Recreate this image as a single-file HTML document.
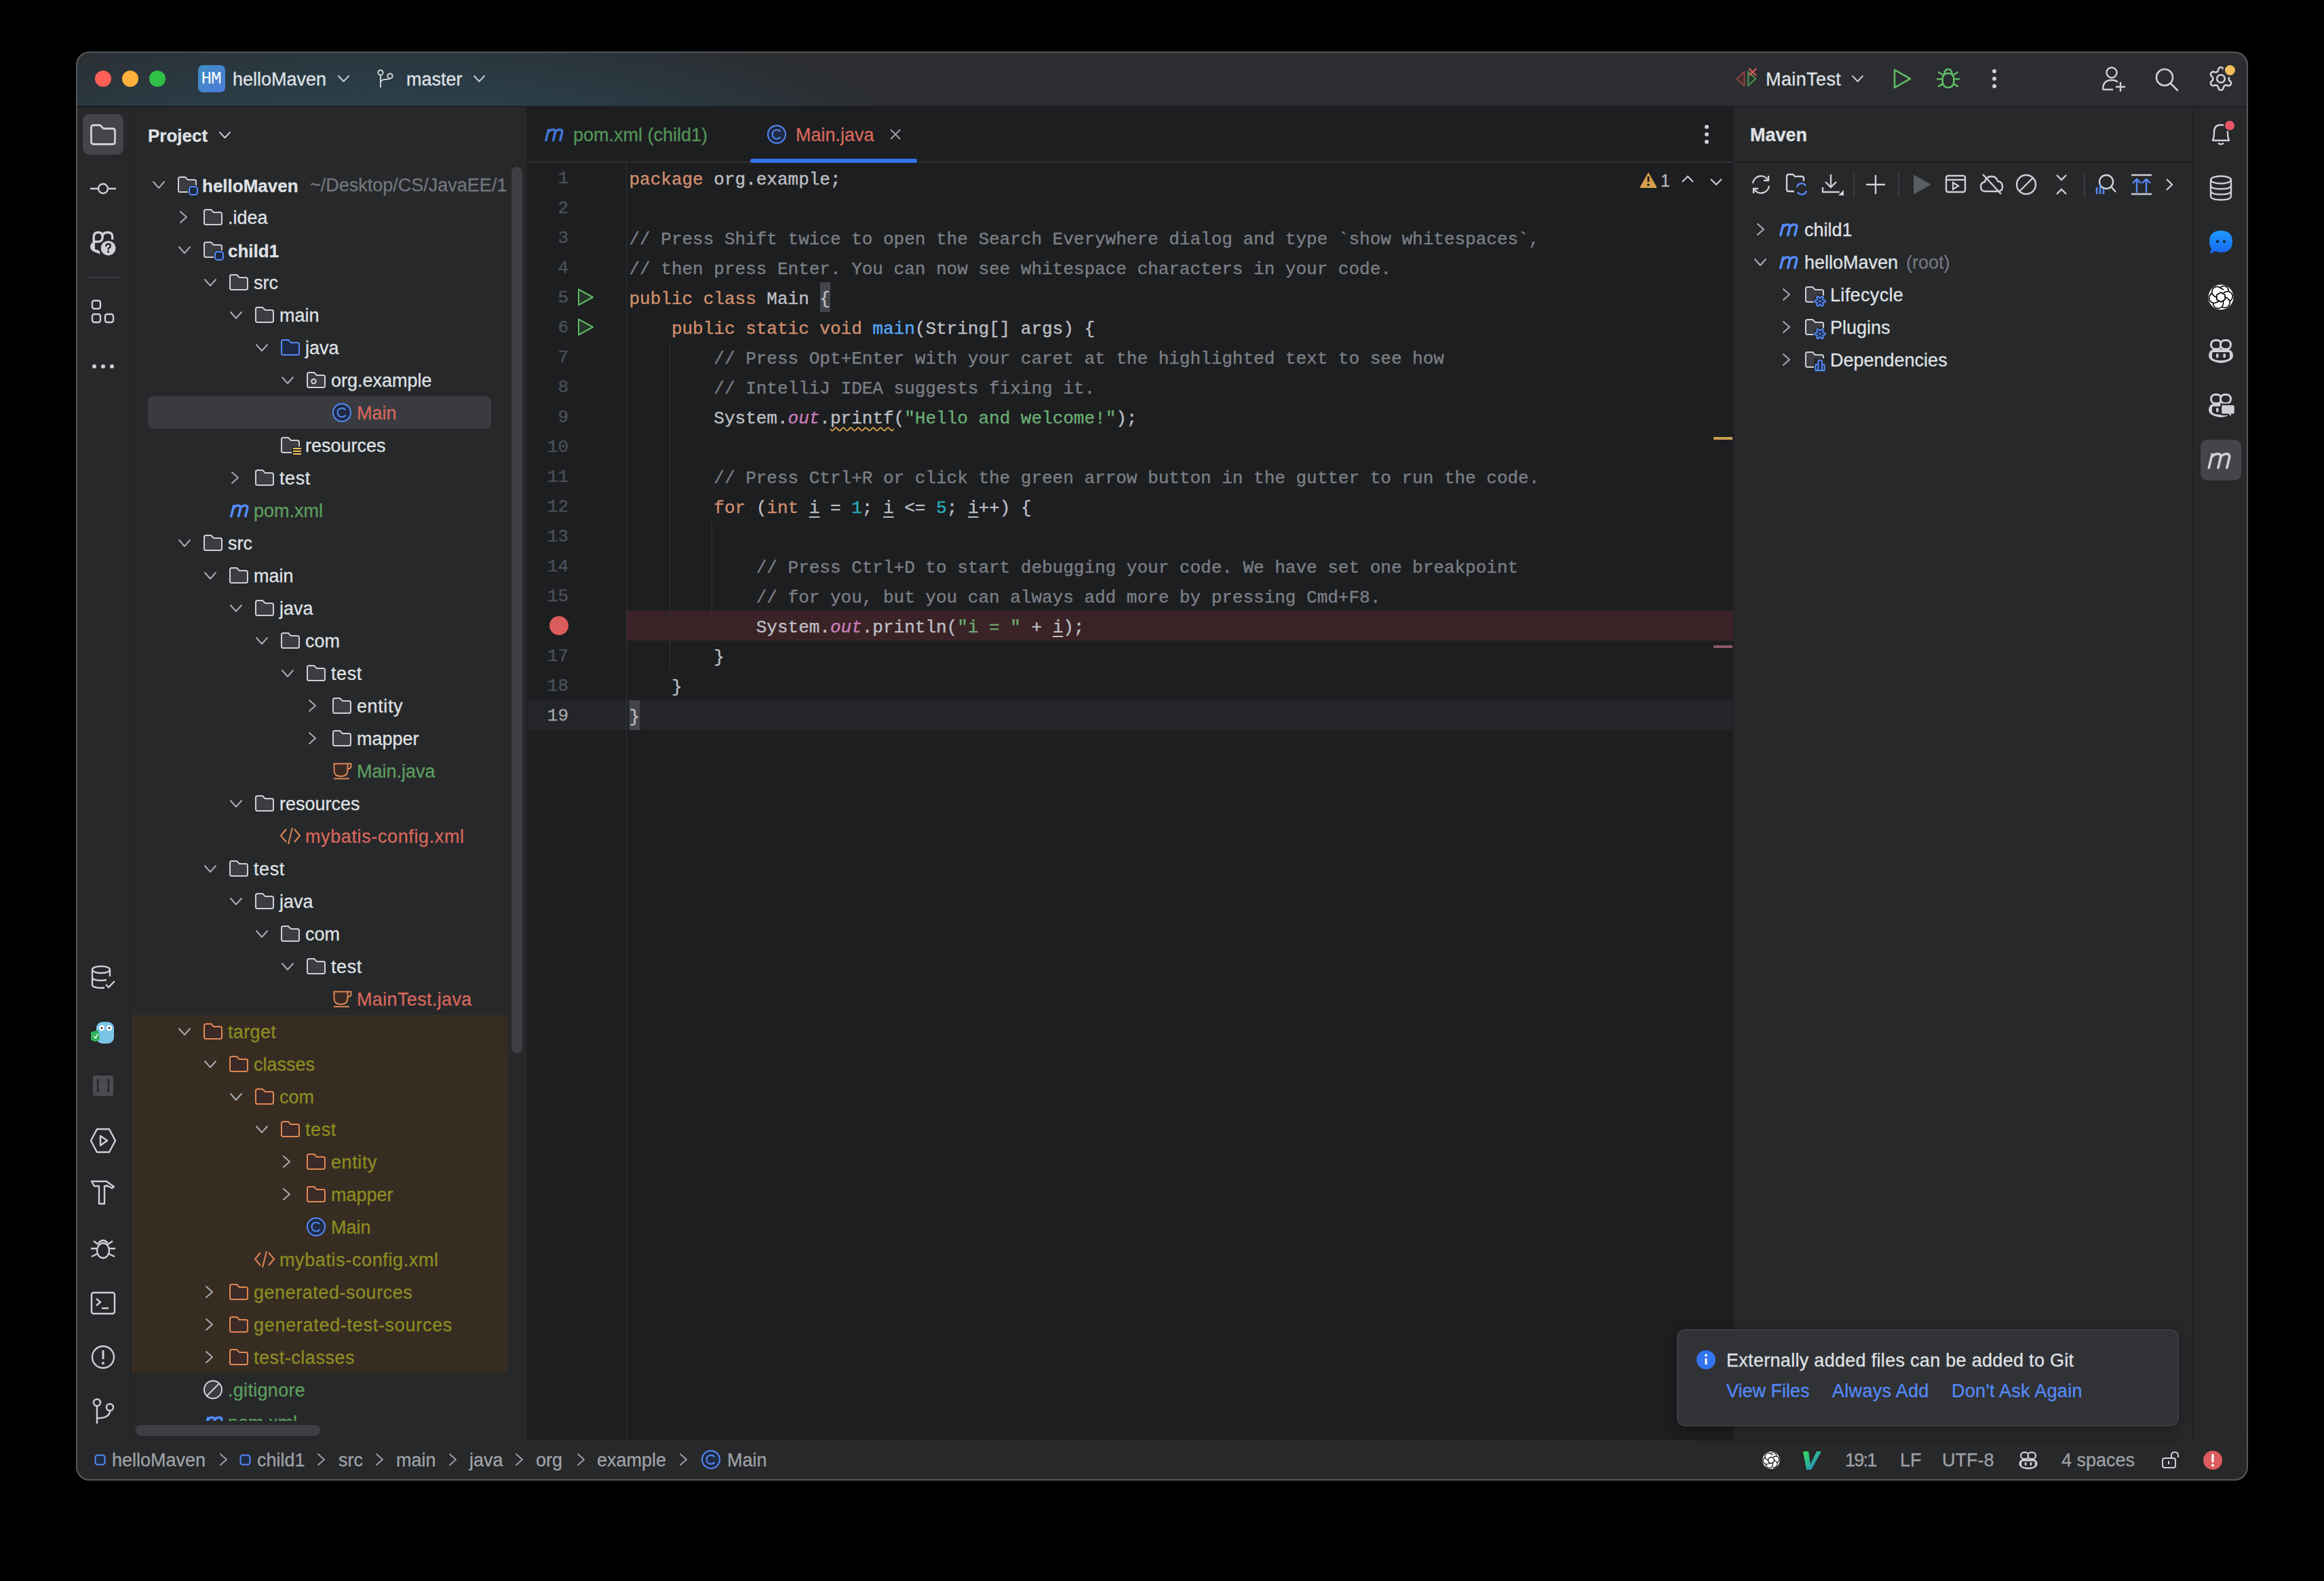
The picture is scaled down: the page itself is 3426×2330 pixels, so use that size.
<!DOCTYPE html>
<html><head><meta charset="utf-8">
<style>
*{box-sizing:border-box;margin:0;padding:0}
html,body{width:3426px;height:2330px;background:#000;overflow:hidden}
body{position:relative;font-family:"Liberation Sans",sans-serif;color:#dfe1e5}
.a{position:absolute}
#win{position:absolute;left:112px;top:76px;width:3202px;height:2106px;border-radius:20px;overflow:hidden;background:#27282a}
#pg{position:absolute;left:-112px;top:-76px;width:3426px;height:2330px}
#winborder{position:absolute;left:112px;top:76px;width:3202px;height:2106px;border-radius:20px;border:2px solid #55575a;z-index:50}
.t{position:absolute;white-space:pre;line-height:1;-webkit-text-stroke:0.3px currentColor}
.mono{font-family:"Liberation Mono",monospace;-webkit-text-stroke:0.4px currentColor}
.mono span{-webkit-text-stroke:0.4px currentColor}
svg.ic{position:absolute;overflow:visible}
</style></head><body>
<div id="win"><div id="pg">
<div class="a" style="left:112px;top:76px;width:3202px;height:80px;background:radial-gradient(ellipse 780px 210px at 460px 150px,#2d4854 0%,#2a3c46 50%,#2b2d30 100%);"></div>
<div class="a" style="left:112px;top:156px;width:3202px;height:2px;background:#1e1f22;"></div>
<div class="a" style="left:112px;top:158px;width:80px;height:1964px;background:#27282a;"></div>
<div class="a" style="left:192px;top:158px;width:1px;height:1964px;background:#1e1f22;"></div>
<div class="a" style="left:193px;top:158px;width:583px;height:1964px;background:#27282a;"></div>
<div class="a" style="left:776px;top:158px;width:1px;height:1964px;background:#1e1f22;"></div>
<div class="a" style="left:777px;top:158px;width:1778px;height:1964px;background:#1d1e20;"></div>
<div class="a" style="left:2555px;top:158px;width:1px;height:1964px;background:#1e1f22;"></div>
<div class="a" style="left:2556px;top:158px;width:676px;height:1964px;background:#27282a;"></div>
<div class="a" style="left:3232px;top:158px;width:1px;height:1964px;background:#1e1f22;"></div>
<div class="a" style="left:3233px;top:158px;width:81px;height:1964px;background:#27282a;"></div>
<div class="a" style="left:112px;top:2122px;width:3202px;height:1px;background:#1e1f22;"></div>
<div class="a" style="left:112px;top:2123px;width:3202px;height:59px;background:#27282a;"></div>
<div class="a" style="left:140px;top:104px;width:24px;height:24px;border-radius:50%;background:#ff5f57"></div>
<div class="a" style="left:180px;top:104px;width:24px;height:24px;border-radius:50%;background:#fdb13c"></div>
<div class="a" style="left:220px;top:104px;width:24px;height:24px;border-radius:50%;background:#30bf47"></div>
<div class="a" style="left:292px;top:96px;width:40px;height:40px;border-radius:7px;background:linear-gradient(135deg,#3f8cc4,#4c7ed9)"></div>
<div class="t" style="left:296.5px;top:103.49px;font-size:26px;color:#ffffff;font-weight:normal;font-family:'Liberation Mono',monospace;letter-spacing:-1px;-webkit-text-stroke:0">HM</div>
<div class="t" style="left:343px;top:104.14px;font-size:27px;color:#dfe1e5;font-weight:normal;">helloMaven</div>
<svg class="ic" style="left:496.5px;top:110.0px" width="19" height="12" viewBox="0 0 19 12" ><path d="M2 2 L9.5 10 L17 2" fill="none" stroke="#c9ccd2" stroke-width="2" stroke-linecap="round" stroke-linejoin="round"/></svg>
<svg class="ic" style="left:556px;top:101px" width="26" height="30" viewBox="0 0 26 30" ><circle cx="5" cy="6" r="3.6" fill="none" stroke="#ced0d6" stroke-width="2"/><circle cx="19" cy="11" r="3.6" fill="none" stroke="#ced0d6" stroke-width="2"/><path d="M5 9.6 V28 M5 22 Q5 16 12 16 Q19 16 19 14.6" fill="none" stroke="#ced0d6" stroke-width="2"/></svg>
<div class="t" style="left:599px;top:104.14px;font-size:27px;color:#dfe1e5;font-weight:normal;">master</div>
<svg class="ic" style="left:696.5px;top:110.0px" width="19" height="12" viewBox="0 0 19 12" ><path d="M2 2 L9.5 10 L17 2" fill="none" stroke="#c9ccd2" stroke-width="2" stroke-linecap="round" stroke-linejoin="round"/></svg>
<svg class="ic" style="left:2556px;top:98px" width="36" height="36" viewBox="0 0 36 36" ><path d="M15.5 7.5 L4.5 18 L15.5 28.5 Z" fill="#43282a" stroke="#8a4545" stroke-width="2.2" stroke-linejoin="round"/><path d="M21 7.5 L32 18 L21 28.5 Z" fill="#25382a" stroke="#4f8a55" stroke-width="2.2" stroke-linejoin="round"/><path d="M22.5 3 L33 13.5 M33 3 L22.5 13.5" stroke="#e05555" stroke-width="2.4"/></svg>
<div class="t" style="left:2603px;top:104.14px;font-size:27px;color:#dfe1e5;font-weight:normal;letter-spacing:0.4px;">MainTest</div>
<svg class="ic" style="left:2728.5px;top:110.0px" width="19" height="12" viewBox="0 0 19 12" ><path d="M2 2 L9.5 10 L17 2" fill="none" stroke="#c9ccd2" stroke-width="2" stroke-linecap="round" stroke-linejoin="round"/></svg>
<svg class="ic" style="left:2790px;top:100px" width="30" height="32" viewBox="0 0 30 32" ><path d="M3 3 L26 16 L3 29 Z" fill="none" stroke="#5fb865" stroke-width="2.6" stroke-linejoin="round"/></svg>
<svg class="ic" style="left:2854px;top:98px" width="36" height="36" viewBox="0 0 36 36" ><path d="M18 10 Q26.5 10 26.5 20 Q26.5 31 18 31 Q9.5 31 9.5 20 Q9.5 10 18 10 Z" fill="none" stroke="#5fb865" stroke-width="2.6"/><path d="M12.5 11.5 Q12.5 4 18 4 Q23.5 4 23.5 11.5" fill="none" stroke="#5fb865" stroke-width="2.6"/><path d="M2 18.5 H9.5 M26.5 18.5 H34 M4 8.5 L10.5 12.5 M32 8.5 L25.5 12.5 M4 29 L10.5 25.5 M32 29 L25.5 25.5" stroke="#5fb865" stroke-width="2.6" stroke-linecap="round"/></svg>
<div class="a" style="left:2937px;top:102px;width:6px;height:6px;border-radius:50%;background:#ced0d6"></div>
<div class="a" style="left:2937px;top:113px;width:6px;height:6px;border-radius:50%;background:#ced0d6"></div>
<div class="a" style="left:2937px;top:124px;width:6px;height:6px;border-radius:50%;background:#ced0d6"></div>
<svg class="ic" style="left:3097px;top:96px" width="40" height="42" viewBox="0 0 40 42" ><circle cx="16" cy="11" r="7.5" fill="none" stroke="#ced0d6" stroke-width="2.4"/><path d="M3 36 Q3 22 16 22 Q22 22 25 25" fill="none" stroke="#ced0d6" stroke-width="2.4"/><path d="M3 36 H18 M29 25 V39 M22 32 H36" stroke="#ced0d6" stroke-width="2.4"/></svg>
<svg class="ic" style="left:3175px;top:98px" width="40" height="40" viewBox="0 0 40 40" ><circle cx="16" cy="16" r="12" fill="none" stroke="#ced0d6" stroke-width="2.6"/><path d="M25 25 L35 35" stroke="#ced0d6" stroke-width="2.6" stroke-linecap="round"/></svg>
<svg class="ic" style="left:3255px;top:98px" width="38" height="38" viewBox="0 0 38 38" ><path d="M19.00 34.80 L18.12 34.70 L17.28 34.40 L16.48 33.89 L15.78 33.15 L15.32 31.72 L15.01 30.28 L14.59 29.49 L14.16 28.88 L13.70 28.40 L13.20 28.05 L12.64 27.79 L12.00 27.64 L11.25 27.57 L10.36 27.60 L8.96 28.04 L7.49 28.36 L6.50 28.13 L5.66 27.69 L4.98 27.11 L4.45 26.40 L4.10 25.59 L3.94 24.71 L3.98 23.77 L4.27 22.79 L5.28 21.68 L6.37 20.69 L6.84 19.93 L7.15 19.24 L7.34 18.61 L7.40 18.00 L7.34 17.39 L7.15 16.76 L6.84 16.07 L6.37 15.31 L5.28 14.32 L4.27 13.21 L3.98 12.23 L3.94 11.29 L4.10 10.41 L4.45 9.60 L4.98 8.89 L5.66 8.31 L6.50 7.87 L7.49 7.64 L8.96 7.96 L10.36 8.40 L11.25 8.43 L12.00 8.36 L12.64 8.21 L13.20 7.95 L13.70 7.60 L14.16 7.12 L14.59 6.51 L15.01 5.72 L15.32 4.28 L15.78 2.85 L16.48 2.11 L17.28 1.60 L18.12 1.30 L19.00 1.20 L19.88 1.30 L20.72 1.60 L21.52 2.11 L22.22 2.85 L22.68 4.28 L22.99 5.72 L23.41 6.51 L23.84 7.12 L24.30 7.60 L24.80 7.95 L25.36 8.21 L26.00 8.36 L26.75 8.43 L27.64 8.40 L29.04 7.96 L30.51 7.64 L31.50 7.87 L32.34 8.31 L33.02 8.89 L33.55 9.60 L33.90 10.41 L34.06 11.29 L34.02 12.23 L33.73 13.21 L32.72 14.32 L31.63 15.31 L31.16 16.07 L30.85 16.76 L30.66 17.39 L30.60 18.00 L30.66 18.61 L30.85 19.24 L31.16 19.93 L31.63 20.69 L32.72 21.68 L33.73 22.79 L34.02 23.77 L34.06 24.71 L33.90 25.59 L33.55 26.40 L33.02 27.11 L32.34 27.69 L31.50 28.13 L30.51 28.36 L29.04 28.04 L27.64 27.60 L26.75 27.57 L26.00 27.64 L25.36 27.79 L24.80 28.05 L24.30 28.40 L23.84 28.88 L23.41 29.49 L22.99 30.28 L22.68 31.72 L22.22 33.15 L21.52 33.89 L20.72 34.40 L19.88 34.70 L19.00 34.80 Z" fill="none" stroke="#ced0d6" stroke-width="2.6" stroke-linejoin="round"/><circle cx="19" cy="18" r="5.8" fill="none" stroke="#ced0d6" stroke-width="2.6"/></svg>
<div class="a" style="left:3277px;top:93px;width:21px;height:21px;border-radius:50%;background:#f2be5a;border:3px solid #2b2d30"></div>
<div class="a" style="left:122px;top:168px;width:60px;height:60px;background:#43454a;border-radius:10px"></div>
<svg class="ic" style="left:132px;top:182px" width="40" height="33" viewBox="0 0 40 33" ><path d="M2.5 6 Q2.5 2.5 6 2.5 L15.5 2.5 L20.5 7.5 L34 7.5 Q37.5 7.5 37.5 11 L37.5 27 Q37.5 30.5 34 30.5 L6 30.5 Q2.5 30.5 2.5 27 Z" fill="none" stroke="#ced0d6" stroke-width="2.8" stroke-linejoin="round"/></svg>
<svg class="ic" style="left:132px;top:266px" width="40" height="24" viewBox="0 0 40 24" ><circle cx="20" cy="12" r="7" fill="none" stroke="#ced0d6" stroke-width="2.4"/><path d="M1 12 H13 M27 12 H39" stroke="#ced0d6" stroke-width="2.4"/></svg>
<svg class="ic" style="left:122px;top:327px" width="60" height="60" viewBox="0 0 60 60" ><path d="M16.2 22 Q16.2 15.5 23 15.5 Q29.2 15.5 29.2 22 Q29.2 29.2 22.5 29.2 L16.2 29.2 Z" fill="none" stroke="#ced0d6" stroke-width="3.4" stroke-linejoin="round"/><path d="M29.2 22 Q29.2 15.5 36.5 15.5 Q43.8 15.5 43.8 22 L43.8 26" fill="none" stroke="#ced0d6" stroke-width="3.4"/><path d="M16.5 29 Q11 31.5 11 36.5 Q11 42 17.5 44.5 L26 47.5 L24.5 42.5 L18 40.3 L18 29 Z" fill="#ced0d6"/><circle cx="37.6" cy="38.7" r="13" fill="#27282a"/><circle cx="37.6" cy="38.7" r="10.8" fill="#ced0d6"/><path d="M34.3 35.3 Q34.5 32.5 37.7 32.5 Q40.9 32.5 40.9 35.3 Q40.9 37.3 38.5 38.5 Q37.6 39.2 37.6 40.5" fill="none" stroke="#27282a" stroke-width="2.4" stroke-linecap="round"/><circle cx="37.6" cy="44" r="1.6" fill="#27282a"/></svg>
<div class="a" style="left:128px;top:408px;width:48px;height:2px;background:#393b40;"></div>
<svg class="ic" style="left:134px;top:441px" width="36" height="38" viewBox="0 0 36 38" ><rect x="2" y="2" width="12" height="12" rx="3" fill="none" stroke="#ced0d6" stroke-width="2.4"/><rect x="2" y="22" width="12" height="12" rx="3" fill="none" stroke="#ced0d6" stroke-width="2.4"/><rect x="21" y="22" width="12" height="12" rx="3" fill="none" stroke="#ced0d6" stroke-width="2.4"/></svg>
<div class="a" style="left:136px;top:537px;width:6px;height:6px;border-radius:50%;background:#ced0d6"></div>
<div class="a" style="left:149px;top:537px;width:6px;height:6px;border-radius:50%;background:#ced0d6"></div>
<div class="a" style="left:162px;top:537px;width:6px;height:6px;border-radius:50%;background:#ced0d6"></div>
<svg class="ic" style="left:132.0px;top:1421.0px" width="40" height="40" viewBox="0 0 40 40" ><ellipse cx="17" cy="8" rx="13" ry="5" fill="none" stroke="#ced0d6" stroke-width="2.4"/><path d="M4 8 V30 Q4 35 17 35 Q20 35 22 34.5 M30 8 V18 M4 19 Q4 24 17 24 Q22 24 25 23" fill="none" stroke="#ced0d6" stroke-width="2.4"/><path d="M24 30 L28 34 L37 25" fill="none" stroke="#ced0d6" stroke-width="2.4"/></svg>
<svg class="ic" style="left:132.0px;top:1502.0px" width="40" height="40" viewBox="0 0 40 40" ><rect x="10" y="4" width="26" height="32" rx="9" fill="#7bc4e8"/><circle cx="18" cy="13" r="4" fill="#fff"/><circle cx="29" cy="13" r="4" fill="#fff"/><circle cx="18" cy="13" r="1.6" fill="#222"/><circle cx="29" cy="13" r="1.6" fill="#222"/><path d="M2 19 L13 16 L15 30 Q8 36 2 30 Z" fill="#2fb35a"/><path d="M6 25 L9 28 L12 22" fill="none" stroke="#fff" stroke-width="1.6"/></svg>
<svg class="ic" style="left:132.0px;top:1580.0px" width="40" height="40" viewBox="0 0 40 40" ><rect x="5" y="5" width="30" height="30" rx="3" fill="#4a4c50"/><path d="M15 12 H12 V28 H15 M25 12 H28 V28 H25" fill="none" stroke="#27282a" stroke-width="2.6"/></svg>
<svg class="ic" style="left:132.0px;top:1661.0px" width="40" height="40" viewBox="0 0 40 40" ><path d="M11 3 H29 L38 20 L29 37 H11 L2 20 Z" fill="none" stroke="#ced0d6" stroke-width="2.4" stroke-linejoin="round"/><path d="M16 13 L26 20 L16 27 Z" fill="none" stroke="#ced0d6" stroke-width="2.4" stroke-linejoin="round"/></svg>
<svg class="ic" style="left:132.0px;top:1737.0px" width="40" height="40" viewBox="0 0 40 40" ><path d="M3 4 H25 L36 12 L33 14 L25 10 V11 H22 V37 H14 V11 H7 Z" fill="none" stroke="#ced0d6" stroke-width="2.4" stroke-linejoin="round"/></svg>
<svg class="ic" style="left:132.0px;top:1821.0px" width="40" height="40" viewBox="0 0 40 40" ><ellipse cx="20" cy="22" rx="9" ry="11" fill="none" stroke="#ced0d6" stroke-width="2.4"/><path d="M13 11 Q20 3 27 11" fill="none" stroke="#ced0d6" stroke-width="2.4"/><path d="M2 19 H11 M29 19 H38 M3 31 L11 27 M37 31 L29 27 M6 8 L13 13 M34 8 L27 13" stroke="#ced0d6" stroke-width="2.4"/></svg>
<svg class="ic" style="left:132.0px;top:1901.0px" width="40" height="40" viewBox="0 0 40 40" ><rect x="3" y="4" width="34" height="31" rx="3" fill="none" stroke="#ced0d6" stroke-width="2.4"/><path d="M10 13 L16 18 L10 23 M18 27 H28" fill="none" stroke="#ced0d6" stroke-width="2.4"/></svg>
<svg class="ic" style="left:132.0px;top:1980.0px" width="40" height="40" viewBox="0 0 40 40" ><circle cx="20" cy="20" r="16" fill="none" stroke="#ced0d6" stroke-width="2.4"/><path d="M20 10 V23" stroke="#ced0d6" stroke-width="3"/><circle cx="20" cy="29" r="2" fill="#ced0d6"/></svg>
<svg class="ic" style="left:132.0px;top:2060.0px" width="40" height="40" viewBox="0 0 40 40" ><circle cx="11" cy="7" r="5" fill="none" stroke="#ced0d6" stroke-width="2.4"/><circle cx="30" cy="14" r="5" fill="none" stroke="#ced0d6" stroke-width="2.4"/><path d="M11 12 V38 M11 30 Q30 30 30 19" fill="none" stroke="#ced0d6" stroke-width="2.4"/></svg>
<div class="t" style="left:218px;top:186.99px;font-size:26px;color:#dfe1e5;font-weight:bold;">Project</div>
<svg class="ic" style="left:321.5px;top:193.0px" width="19" height="12" viewBox="0 0 19 12" ><path d="M2 2 L9.5 10 L17 2" fill="none" stroke="#c9ccd2" stroke-width="2" stroke-linecap="round" stroke-linejoin="round"/></svg>
<div class="a" style="left:194px;top:1496px;width:554px;height:528px;background:#372c22;"></div>
<div class="a" style="left:218px;top:584px;width:506px;height:48px;background:#393b40;border-radius:8px"></div>
<div class="a" style="left:193px;top:158px;width:583px;height:1936px;overflow:hidden"><div class="a" style="left:-193px;top:-158px;width:3426px;height:2330px">
<svg class="ic" style="left:224.0px;top:265.5px" width="20" height="13" viewBox="0 0 20 13" ><path d="M2 2 L10.0 11 L18 2" fill="none" stroke="#a8abb1" stroke-width="2" stroke-linecap="round" stroke-linejoin="round"/></svg>
<svg class="ic" style="left:262px;top:260px" width="32" height="30" viewBox="0 0 32 30" ><path d="M1 3.5 Q1 1 3.5 1 L11 1 L15 5 L24.5 5 Q27 5 27 7.5 L27 20.5 Q27 23 24.5 23 L3.5 23 Q1 23 1 20.5 Z" fill="#3b3d42" stroke="#ced0d6" stroke-width="2"/><rect x="15" y="13" width="16" height="16" rx="4" fill="#27282a"/><rect x="17" y="15" width="12" height="12" rx="3.5" fill="#1e2a45" stroke="#548af7" stroke-width="2"/></svg>
<div class="t" style="left:298px;top:260.99px;font-size:26px;color:#dfe1e5;font-weight:bold;">helloMaven</div>
<div class="t" style="left:457px;top:260.14px;font-size:27px;color:#72767d;font-weight:normal;">~/Desktop/CS/JavaEE/1</div>
<svg class="ic" style="left:263.5px;top:310.0px" width="13" height="20" viewBox="0 0 13 20" ><path d="M2 2 L11 10.0 L2 18" fill="none" stroke="#a8abb1" stroke-width="2" stroke-linecap="round" stroke-linejoin="round"/></svg>
<svg class="ic" style="left:300px;top:308px" width="32" height="30" viewBox="0 0 32 30" ><path d="M1 3.5 Q1 1 3.5 1 L11 1 L15 5 L24.5 5 Q27 5 27 7.5 L27 20.5 Q27 23 24.5 23 L3.5 23 Q1 23 1 20.5 Z" fill="#3b3d42" stroke="#ced0d6" stroke-width="2"/></svg>
<div class="t" style="left:336px;top:308.14px;font-size:27px;color:#dfe1e5;font-weight:normal;">.idea</div>
<svg class="ic" style="left:262.0px;top:361.5px" width="20" height="13" viewBox="0 0 20 13" ><path d="M2 2 L10.0 11 L18 2" fill="none" stroke="#a8abb1" stroke-width="2" stroke-linecap="round" stroke-linejoin="round"/></svg>
<svg class="ic" style="left:300px;top:356px" width="32" height="30" viewBox="0 0 32 30" ><path d="M1 3.5 Q1 1 3.5 1 L11 1 L15 5 L24.5 5 Q27 5 27 7.5 L27 20.5 Q27 23 24.5 23 L3.5 23 Q1 23 1 20.5 Z" fill="#3b3d42" stroke="#ced0d6" stroke-width="2"/><rect x="15" y="13" width="16" height="16" rx="4" fill="#27282a"/><rect x="17" y="15" width="12" height="12" rx="3.5" fill="#1e2a45" stroke="#548af7" stroke-width="2"/></svg>
<div class="t" style="left:336px;top:356.99px;font-size:26px;color:#dfe1e5;font-weight:bold;">child1</div>
<svg class="ic" style="left:300.0px;top:409.5px" width="20" height="13" viewBox="0 0 20 13" ><path d="M2 2 L10.0 11 L18 2" fill="none" stroke="#a8abb1" stroke-width="2" stroke-linecap="round" stroke-linejoin="round"/></svg>
<svg class="ic" style="left:338px;top:404px" width="32" height="30" viewBox="0 0 32 30" ><path d="M1 3.5 Q1 1 3.5 1 L11 1 L15 5 L24.5 5 Q27 5 27 7.5 L27 20.5 Q27 23 24.5 23 L3.5 23 Q1 23 1 20.5 Z" fill="#3b3d42" stroke="#ced0d6" stroke-width="2"/></svg>
<div class="t" style="left:374px;top:404.14px;font-size:27px;color:#dfe1e5;font-weight:normal;">src</div>
<svg class="ic" style="left:338.0px;top:457.5px" width="20" height="13" viewBox="0 0 20 13" ><path d="M2 2 L10.0 11 L18 2" fill="none" stroke="#a8abb1" stroke-width="2" stroke-linecap="round" stroke-linejoin="round"/></svg>
<svg class="ic" style="left:376px;top:452px" width="32" height="30" viewBox="0 0 32 30" ><path d="M1 3.5 Q1 1 3.5 1 L11 1 L15 5 L24.5 5 Q27 5 27 7.5 L27 20.5 Q27 23 24.5 23 L3.5 23 Q1 23 1 20.5 Z" fill="#3b3d42" stroke="#ced0d6" stroke-width="2"/></svg>
<div class="t" style="left:412px;top:452.14px;font-size:27px;color:#dfe1e5;font-weight:normal;">main</div>
<svg class="ic" style="left:376.0px;top:505.5px" width="20" height="13" viewBox="0 0 20 13" ><path d="M2 2 L10.0 11 L18 2" fill="none" stroke="#a8abb1" stroke-width="2" stroke-linecap="round" stroke-linejoin="round"/></svg>
<svg class="ic" style="left:414px;top:500px" width="32" height="30" viewBox="0 0 32 30" ><path d="M1 3.5 Q1 1 3.5 1 L11 1 L15 5 L24.5 5 Q27 5 27 7.5 L27 20.5 Q27 23 24.5 23 L3.5 23 Q1 23 1 20.5 Z" fill="#1e2a45" stroke="#548af7" stroke-width="2"/></svg>
<div class="t" style="left:450px;top:500.14px;font-size:27px;color:#dfe1e5;font-weight:normal;">java</div>
<svg class="ic" style="left:414.0px;top:553.5px" width="20" height="13" viewBox="0 0 20 13" ><path d="M2 2 L10.0 11 L18 2" fill="none" stroke="#a8abb1" stroke-width="2" stroke-linecap="round" stroke-linejoin="round"/></svg>
<svg class="ic" style="left:452px;top:548px" width="32" height="30" viewBox="0 0 32 30" ><path d="M1 3.5 Q1 1 3.5 1 L11 1 L15 5 L24.5 5 Q27 5 27 7.5 L27 20.5 Q27 23 24.5 23 L3.5 23 Q1 23 1 20.5 Z" fill="#3b3d42" stroke="#ced0d6" stroke-width="2"/><circle cx="10.5" cy="14" r="3.2" fill="none" stroke="#ced0d6" stroke-width="2"/></svg>
<div class="t" style="left:488px;top:548.14px;font-size:27px;color:#dfe1e5;font-weight:normal;">org.example</div>
<svg class="ic" style="left:488px;top:592px" width="32" height="32" viewBox="0 0 32 32" ><circle cx="16" cy="16" r="13" fill="#1f2a44" stroke="#548af7" stroke-width="2"/><path d="M21.5 12.2 A6.6 6.6 0 1 0 21.5 19.8" fill="none" stroke="#548af7" stroke-width="2"/></svg>
<div class="t" style="left:526px;top:596.14px;font-size:27px;color:#d6675c;font-weight:normal;">Main</div>
<svg class="ic" style="left:414px;top:644px" width="32" height="30" viewBox="0 0 32 30" ><path d="M1 3.5 Q1 1 3.5 1 L11 1 L15 5 L24.5 5 Q27 5 27 7.5 L27 20.5 Q27 23 24.5 23 L3.5 23 Q1 23 1 20.5 Z" fill="#3b3d42" stroke="#ced0d6" stroke-width="2"/><rect x="16" y="14" width="16" height="14" fill="#27282a"/><path d="M18 17 H30 M18 21 H30 M18 25 H30" stroke="#f2c55c" stroke-width="2"/></svg>
<div class="t" style="left:450px;top:644.14px;font-size:27px;color:#dfe1e5;font-weight:normal;">resources</div>
<svg class="ic" style="left:339.5px;top:694.0px" width="13" height="20" viewBox="0 0 13 20" ><path d="M2 2 L11 10.0 L2 18" fill="none" stroke="#a8abb1" stroke-width="2" stroke-linecap="round" stroke-linejoin="round"/></svg>
<svg class="ic" style="left:376px;top:692px" width="32" height="30" viewBox="0 0 32 30" ><path d="M1 3.5 Q1 1 3.5 1 L11 1 L15 5 L24.5 5 Q27 5 27 7.5 L27 20.5 Q27 23 24.5 23 L3.5 23 Q1 23 1 20.5 Z" fill="#3b3d42" stroke="#ced0d6" stroke-width="2"/></svg>
<div class="t" style="left:412px;top:692.14px;font-size:27px;color:#dfe1e5;font-weight:normal;letter-spacing:0.6px;">test</div>
<svg class="ic" style="left:339px;top:742px" width="30" height="22" viewBox="0 0 30 22" ><g transform="scale(1.0 1.0)"><path d="M1.8 18.8 L5.6 3.6 M5.2 6.6 Q7.8 3 12.2 3 Q16.4 3 15.4 7.5 L12.6 18.8 M15 7.4 Q17.6 3 22.4 3 Q26.6 3 25.6 7.5 L22.8 18.8" fill="none" stroke="#548af7" stroke-width="3.6" stroke-linecap="round" stroke-linejoin="round" vector-effect="non-scaling-stroke"/></g></svg>
<div class="t" style="left:374px;top:740.14px;font-size:27px;color:#5c9e5f;font-weight:normal;">pom.xml</div>
<svg class="ic" style="left:262.0px;top:793.5px" width="20" height="13" viewBox="0 0 20 13" ><path d="M2 2 L10.0 11 L18 2" fill="none" stroke="#a8abb1" stroke-width="2" stroke-linecap="round" stroke-linejoin="round"/></svg>
<svg class="ic" style="left:300px;top:788px" width="32" height="30" viewBox="0 0 32 30" ><path d="M1 3.5 Q1 1 3.5 1 L11 1 L15 5 L24.5 5 Q27 5 27 7.5 L27 20.5 Q27 23 24.5 23 L3.5 23 Q1 23 1 20.5 Z" fill="#3b3d42" stroke="#ced0d6" stroke-width="2"/></svg>
<div class="t" style="left:336px;top:788.14px;font-size:27px;color:#dfe1e5;font-weight:normal;">src</div>
<svg class="ic" style="left:300.0px;top:841.5px" width="20" height="13" viewBox="0 0 20 13" ><path d="M2 2 L10.0 11 L18 2" fill="none" stroke="#a8abb1" stroke-width="2" stroke-linecap="round" stroke-linejoin="round"/></svg>
<svg class="ic" style="left:338px;top:836px" width="32" height="30" viewBox="0 0 32 30" ><path d="M1 3.5 Q1 1 3.5 1 L11 1 L15 5 L24.5 5 Q27 5 27 7.5 L27 20.5 Q27 23 24.5 23 L3.5 23 Q1 23 1 20.5 Z" fill="#3b3d42" stroke="#ced0d6" stroke-width="2"/></svg>
<div class="t" style="left:374px;top:836.14px;font-size:27px;color:#dfe1e5;font-weight:normal;">main</div>
<svg class="ic" style="left:338.0px;top:889.5px" width="20" height="13" viewBox="0 0 20 13" ><path d="M2 2 L10.0 11 L18 2" fill="none" stroke="#a8abb1" stroke-width="2" stroke-linecap="round" stroke-linejoin="round"/></svg>
<svg class="ic" style="left:376px;top:884px" width="32" height="30" viewBox="0 0 32 30" ><path d="M1 3.5 Q1 1 3.5 1 L11 1 L15 5 L24.5 5 Q27 5 27 7.5 L27 20.5 Q27 23 24.5 23 L3.5 23 Q1 23 1 20.5 Z" fill="#3b3d42" stroke="#ced0d6" stroke-width="2"/></svg>
<div class="t" style="left:412px;top:884.14px;font-size:27px;color:#dfe1e5;font-weight:normal;">java</div>
<svg class="ic" style="left:376.0px;top:937.5px" width="20" height="13" viewBox="0 0 20 13" ><path d="M2 2 L10.0 11 L18 2" fill="none" stroke="#a8abb1" stroke-width="2" stroke-linecap="round" stroke-linejoin="round"/></svg>
<svg class="ic" style="left:414px;top:932px" width="32" height="30" viewBox="0 0 32 30" ><path d="M1 3.5 Q1 1 3.5 1 L11 1 L15 5 L24.5 5 Q27 5 27 7.5 L27 20.5 Q27 23 24.5 23 L3.5 23 Q1 23 1 20.5 Z" fill="#3b3d42" stroke="#ced0d6" stroke-width="2"/></svg>
<div class="t" style="left:450px;top:932.14px;font-size:27px;color:#dfe1e5;font-weight:normal;">com</div>
<svg class="ic" style="left:414.0px;top:985.5px" width="20" height="13" viewBox="0 0 20 13" ><path d="M2 2 L10.0 11 L18 2" fill="none" stroke="#a8abb1" stroke-width="2" stroke-linecap="round" stroke-linejoin="round"/></svg>
<svg class="ic" style="left:452px;top:980px" width="32" height="30" viewBox="0 0 32 30" ><path d="M1 3.5 Q1 1 3.5 1 L11 1 L15 5 L24.5 5 Q27 5 27 7.5 L27 20.5 Q27 23 24.5 23 L3.5 23 Q1 23 1 20.5 Z" fill="#3b3d42" stroke="#ced0d6" stroke-width="2"/></svg>
<div class="t" style="left:488px;top:980.14px;font-size:27px;color:#dfe1e5;font-weight:normal;letter-spacing:0.6px;">test</div>
<svg class="ic" style="left:453.5px;top:1030.0px" width="13" height="20" viewBox="0 0 13 20" ><path d="M2 2 L11 10.0 L2 18" fill="none" stroke="#a8abb1" stroke-width="2" stroke-linecap="round" stroke-linejoin="round"/></svg>
<svg class="ic" style="left:490px;top:1028px" width="32" height="30" viewBox="0 0 32 30" ><path d="M1 3.5 Q1 1 3.5 1 L11 1 L15 5 L24.5 5 Q27 5 27 7.5 L27 20.5 Q27 23 24.5 23 L3.5 23 Q1 23 1 20.5 Z" fill="#3b3d42" stroke="#ced0d6" stroke-width="2"/></svg>
<div class="t" style="left:526px;top:1028.14px;font-size:27px;color:#dfe1e5;font-weight:normal;letter-spacing:0.6px;">entity</div>
<svg class="ic" style="left:453.5px;top:1078.0px" width="13" height="20" viewBox="0 0 13 20" ><path d="M2 2 L11 10.0 L2 18" fill="none" stroke="#a8abb1" stroke-width="2" stroke-linecap="round" stroke-linejoin="round"/></svg>
<svg class="ic" style="left:490px;top:1076px" width="32" height="30" viewBox="0 0 32 30" ><path d="M1 3.5 Q1 1 3.5 1 L11 1 L15 5 L24.5 5 Q27 5 27 7.5 L27 20.5 Q27 23 24.5 23 L3.5 23 Q1 23 1 20.5 Z" fill="#3b3d42" stroke="#ced0d6" stroke-width="2"/></svg>
<div class="t" style="left:526px;top:1076.14px;font-size:27px;color:#dfe1e5;font-weight:normal;">mapper</div>
<svg class="ic" style="left:491px;top:1124px" width="28" height="25" viewBox="0 0 28 25" ><path d="M1.5 1.5 H21.5 V11 Q21.5 20 12 20 H11 Q1.5 20 1.5 11 Z" fill="#3b2a24" stroke="#e08855" stroke-width="2"/><path d="M21.5 1.5 H26.5 V5.5 Q26.5 8.5 21.5 9.5" fill="none" stroke="#e08855" stroke-width="2"/><path d="M1 23.5 H24" stroke="#e08855" stroke-width="2"/></svg>
<div class="t" style="left:526px;top:1124.14px;font-size:27px;color:#5c9e5f;font-weight:normal;">Main.java</div>
<svg class="ic" style="left:338.0px;top:1177.5px" width="20" height="13" viewBox="0 0 20 13" ><path d="M2 2 L10.0 11 L18 2" fill="none" stroke="#a8abb1" stroke-width="2" stroke-linecap="round" stroke-linejoin="round"/></svg>
<svg class="ic" style="left:376px;top:1172px" width="32" height="30" viewBox="0 0 32 30" ><path d="M1 3.5 Q1 1 3.5 1 L11 1 L15 5 L24.5 5 Q27 5 27 7.5 L27 20.5 Q27 23 24.5 23 L3.5 23 Q1 23 1 20.5 Z" fill="#3b3d42" stroke="#ced0d6" stroke-width="2"/></svg>
<div class="t" style="left:412px;top:1172.14px;font-size:27px;color:#dfe1e5;font-weight:normal;">resources</div>
<svg class="ic" style="left:412px;top:1219px" width="32" height="26" viewBox="0 0 32 26" ><path d="M10 3 L2 12.5 L10 22 M22 3 L30 12.5 L22 22 M19 1 L13 25" fill="none" stroke="#e08855" stroke-width="2"/></svg>
<div class="t" style="left:450px;top:1220.14px;font-size:27px;color:#d6675c;font-weight:normal;letter-spacing:0.62px;">mybatis-config.xml</div>
<svg class="ic" style="left:300.0px;top:1273.5px" width="20" height="13" viewBox="0 0 20 13" ><path d="M2 2 L10.0 11 L18 2" fill="none" stroke="#a8abb1" stroke-width="2" stroke-linecap="round" stroke-linejoin="round"/></svg>
<svg class="ic" style="left:338px;top:1268px" width="32" height="30" viewBox="0 0 32 30" ><path d="M1 3.5 Q1 1 3.5 1 L11 1 L15 5 L24.5 5 Q27 5 27 7.5 L27 20.5 Q27 23 24.5 23 L3.5 23 Q1 23 1 20.5 Z" fill="#3b3d42" stroke="#ced0d6" stroke-width="2"/></svg>
<div class="t" style="left:374px;top:1268.14px;font-size:27px;color:#dfe1e5;font-weight:normal;letter-spacing:0.6px;">test</div>
<svg class="ic" style="left:338.0px;top:1321.5px" width="20" height="13" viewBox="0 0 20 13" ><path d="M2 2 L10.0 11 L18 2" fill="none" stroke="#a8abb1" stroke-width="2" stroke-linecap="round" stroke-linejoin="round"/></svg>
<svg class="ic" style="left:376px;top:1316px" width="32" height="30" viewBox="0 0 32 30" ><path d="M1 3.5 Q1 1 3.5 1 L11 1 L15 5 L24.5 5 Q27 5 27 7.5 L27 20.5 Q27 23 24.5 23 L3.5 23 Q1 23 1 20.5 Z" fill="#3b3d42" stroke="#ced0d6" stroke-width="2"/></svg>
<div class="t" style="left:412px;top:1316.14px;font-size:27px;color:#dfe1e5;font-weight:normal;">java</div>
<svg class="ic" style="left:376.0px;top:1369.5px" width="20" height="13" viewBox="0 0 20 13" ><path d="M2 2 L10.0 11 L18 2" fill="none" stroke="#a8abb1" stroke-width="2" stroke-linecap="round" stroke-linejoin="round"/></svg>
<svg class="ic" style="left:414px;top:1364px" width="32" height="30" viewBox="0 0 32 30" ><path d="M1 3.5 Q1 1 3.5 1 L11 1 L15 5 L24.5 5 Q27 5 27 7.5 L27 20.5 Q27 23 24.5 23 L3.5 23 Q1 23 1 20.5 Z" fill="#3b3d42" stroke="#ced0d6" stroke-width="2"/></svg>
<div class="t" style="left:450px;top:1364.14px;font-size:27px;color:#dfe1e5;font-weight:normal;">com</div>
<svg class="ic" style="left:414.0px;top:1417.5px" width="20" height="13" viewBox="0 0 20 13" ><path d="M2 2 L10.0 11 L18 2" fill="none" stroke="#a8abb1" stroke-width="2" stroke-linecap="round" stroke-linejoin="round"/></svg>
<svg class="ic" style="left:452px;top:1412px" width="32" height="30" viewBox="0 0 32 30" ><path d="M1 3.5 Q1 1 3.5 1 L11 1 L15 5 L24.5 5 Q27 5 27 7.5 L27 20.5 Q27 23 24.5 23 L3.5 23 Q1 23 1 20.5 Z" fill="#3b3d42" stroke="#ced0d6" stroke-width="2"/></svg>
<div class="t" style="left:488px;top:1412.14px;font-size:27px;color:#dfe1e5;font-weight:normal;letter-spacing:0.6px;">test</div>
<svg class="ic" style="left:491px;top:1460px" width="28" height="25" viewBox="0 0 28 25" ><path d="M1.5 1.5 H21.5 V11 Q21.5 20 12 20 H11 Q1.5 20 1.5 11 Z" fill="#3b2a24" stroke="#e08855" stroke-width="2"/><path d="M21.5 1.5 H26.5 V5.5 Q26.5 8.5 21.5 9.5" fill="none" stroke="#e08855" stroke-width="2"/><path d="M1 23.5 H24" stroke="#e08855" stroke-width="2"/></svg>
<div class="t" style="left:526px;top:1460.14px;font-size:27px;color:#d6675c;font-weight:normal;letter-spacing:0.35px;">MainTest.java</div>
<svg class="ic" style="left:262.0px;top:1513.5px" width="20" height="13" viewBox="0 0 20 13" ><path d="M2 2 L10.0 11 L18 2" fill="none" stroke="#a8abb1" stroke-width="2" stroke-linecap="round" stroke-linejoin="round"/></svg>
<svg class="ic" style="left:300px;top:1508px" width="32" height="30" viewBox="0 0 32 30" ><path d="M1 3.5 Q1 1 3.5 1 L11 1 L15 5 L24.5 5 Q27 5 27 7.5 L27 20.5 Q27 23 24.5 23 L3.5 23 Q1 23 1 20.5 Z" fill="#3b2a27" stroke="#e08855" stroke-width="2"/></svg>
<div class="t" style="left:336px;top:1508.14px;font-size:27px;color:#8c8d22;font-weight:normal;letter-spacing:0.35px;">target</div>
<svg class="ic" style="left:300.0px;top:1561.5px" width="20" height="13" viewBox="0 0 20 13" ><path d="M2 2 L10.0 11 L18 2" fill="none" stroke="#a8abb1" stroke-width="2" stroke-linecap="round" stroke-linejoin="round"/></svg>
<svg class="ic" style="left:338px;top:1556px" width="32" height="30" viewBox="0 0 32 30" ><path d="M1 3.5 Q1 1 3.5 1 L11 1 L15 5 L24.5 5 Q27 5 27 7.5 L27 20.5 Q27 23 24.5 23 L3.5 23 Q1 23 1 20.5 Z" fill="#3b2a27" stroke="#e08855" stroke-width="2"/></svg>
<div class="t" style="left:374px;top:1556.14px;font-size:27px;color:#8c8d22;font-weight:normal;">classes</div>
<svg class="ic" style="left:338.0px;top:1609.5px" width="20" height="13" viewBox="0 0 20 13" ><path d="M2 2 L10.0 11 L18 2" fill="none" stroke="#a8abb1" stroke-width="2" stroke-linecap="round" stroke-linejoin="round"/></svg>
<svg class="ic" style="left:376px;top:1604px" width="32" height="30" viewBox="0 0 32 30" ><path d="M1 3.5 Q1 1 3.5 1 L11 1 L15 5 L24.5 5 Q27 5 27 7.5 L27 20.5 Q27 23 24.5 23 L3.5 23 Q1 23 1 20.5 Z" fill="#3b2a27" stroke="#e08855" stroke-width="2"/></svg>
<div class="t" style="left:412px;top:1604.14px;font-size:27px;color:#8c8d22;font-weight:normal;">com</div>
<svg class="ic" style="left:376.0px;top:1657.5px" width="20" height="13" viewBox="0 0 20 13" ><path d="M2 2 L10.0 11 L18 2" fill="none" stroke="#a8abb1" stroke-width="2" stroke-linecap="round" stroke-linejoin="round"/></svg>
<svg class="ic" style="left:414px;top:1652px" width="32" height="30" viewBox="0 0 32 30" ><path d="M1 3.5 Q1 1 3.5 1 L11 1 L15 5 L24.5 5 Q27 5 27 7.5 L27 20.5 Q27 23 24.5 23 L3.5 23 Q1 23 1 20.5 Z" fill="#3b2a27" stroke="#e08855" stroke-width="2"/></svg>
<div class="t" style="left:450px;top:1652.14px;font-size:27px;color:#8c8d22;font-weight:normal;letter-spacing:0.6px;">test</div>
<svg class="ic" style="left:415.5px;top:1702.0px" width="13" height="20" viewBox="0 0 13 20" ><path d="M2 2 L11 10.0 L2 18" fill="none" stroke="#a8abb1" stroke-width="2" stroke-linecap="round" stroke-linejoin="round"/></svg>
<svg class="ic" style="left:452px;top:1700px" width="32" height="30" viewBox="0 0 32 30" ><path d="M1 3.5 Q1 1 3.5 1 L11 1 L15 5 L24.5 5 Q27 5 27 7.5 L27 20.5 Q27 23 24.5 23 L3.5 23 Q1 23 1 20.5 Z" fill="#3b2a27" stroke="#e08855" stroke-width="2"/></svg>
<div class="t" style="left:488px;top:1700.14px;font-size:27px;color:#8c8d22;font-weight:normal;letter-spacing:0.6px;">entity</div>
<svg class="ic" style="left:415.5px;top:1750.0px" width="13" height="20" viewBox="0 0 13 20" ><path d="M2 2 L11 10.0 L2 18" fill="none" stroke="#a8abb1" stroke-width="2" stroke-linecap="round" stroke-linejoin="round"/></svg>
<svg class="ic" style="left:452px;top:1748px" width="32" height="30" viewBox="0 0 32 30" ><path d="M1 3.5 Q1 1 3.5 1 L11 1 L15 5 L24.5 5 Q27 5 27 7.5 L27 20.5 Q27 23 24.5 23 L3.5 23 Q1 23 1 20.5 Z" fill="#3b2a27" stroke="#e08855" stroke-width="2"/></svg>
<div class="t" style="left:488px;top:1748.14px;font-size:27px;color:#8c8d22;font-weight:normal;">mapper</div>
<svg class="ic" style="left:450px;top:1792px" width="32" height="32" viewBox="0 0 32 32" ><circle cx="16" cy="16" r="13" fill="#1f2a44" stroke="#548af7" stroke-width="2"/><path d="M21.5 12.2 A6.6 6.6 0 1 0 21.5 19.8" fill="none" stroke="#548af7" stroke-width="2"/></svg>
<div class="t" style="left:488px;top:1796.14px;font-size:27px;color:#8c8d22;font-weight:normal;">Main</div>
<svg class="ic" style="left:374px;top:1843px" width="32" height="26" viewBox="0 0 32 26" ><path d="M10 3 L2 12.5 L10 22 M22 3 L30 12.5 L22 22 M19 1 L13 25" fill="none" stroke="#e08855" stroke-width="2"/></svg>
<div class="t" style="left:412px;top:1844.14px;font-size:27px;color:#8c8d22;font-weight:normal;letter-spacing:0.62px;">mybatis-config.xml</div>
<svg class="ic" style="left:301.5px;top:1894.0px" width="13" height="20" viewBox="0 0 13 20" ><path d="M2 2 L11 10.0 L2 18" fill="none" stroke="#a8abb1" stroke-width="2" stroke-linecap="round" stroke-linejoin="round"/></svg>
<svg class="ic" style="left:338px;top:1892px" width="32" height="30" viewBox="0 0 32 30" ><path d="M1 3.5 Q1 1 3.5 1 L11 1 L15 5 L24.5 5 Q27 5 27 7.5 L27 20.5 Q27 23 24.5 23 L3.5 23 Q1 23 1 20.5 Z" fill="#3b2a27" stroke="#e08855" stroke-width="2"/></svg>
<div class="t" style="left:374px;top:1892.14px;font-size:27px;color:#8c8d22;font-weight:normal;letter-spacing:0.54px;">generated-sources</div>
<svg class="ic" style="left:301.5px;top:1942.0px" width="13" height="20" viewBox="0 0 13 20" ><path d="M2 2 L11 10.0 L2 18" fill="none" stroke="#a8abb1" stroke-width="2" stroke-linecap="round" stroke-linejoin="round"/></svg>
<svg class="ic" style="left:338px;top:1940px" width="32" height="30" viewBox="0 0 32 30" ><path d="M1 3.5 Q1 1 3.5 1 L11 1 L15 5 L24.5 5 Q27 5 27 7.5 L27 20.5 Q27 23 24.5 23 L3.5 23 Q1 23 1 20.5 Z" fill="#3b2a27" stroke="#e08855" stroke-width="2"/></svg>
<div class="t" style="left:374px;top:1940.14px;font-size:27px;color:#8c8d22;font-weight:normal;letter-spacing:0.7px;">generated-test-sources</div>
<svg class="ic" style="left:301.5px;top:1990.0px" width="13" height="20" viewBox="0 0 13 20" ><path d="M2 2 L11 10.0 L2 18" fill="none" stroke="#a8abb1" stroke-width="2" stroke-linecap="round" stroke-linejoin="round"/></svg>
<svg class="ic" style="left:338px;top:1988px" width="32" height="30" viewBox="0 0 32 30" ><path d="M1 3.5 Q1 1 3.5 1 L11 1 L15 5 L24.5 5 Q27 5 27 7.5 L27 20.5 Q27 23 24.5 23 L3.5 23 Q1 23 1 20.5 Z" fill="#3b2a27" stroke="#e08855" stroke-width="2"/></svg>
<div class="t" style="left:374px;top:1988.14px;font-size:27px;color:#8c8d22;font-weight:normal;letter-spacing:0.55px;">test-classes</div>
<svg class="ic" style="left:299px;top:2033px" width="30" height="30" viewBox="0 0 30 30" ><circle cx="15" cy="15" r="13" fill="#3b3d42" stroke="#ced0d6" stroke-width="2"/><path d="M24 6 L6 24" stroke="#ced0d6" stroke-width="2"/></svg>
<div class="t" style="left:336px;top:2036.14px;font-size:27px;color:#5c9e5f;font-weight:normal;letter-spacing:0.3px;">.gitignore</div>
<svg class="ic" style="left:301px;top:2086px" width="30" height="22" viewBox="0 0 30 22" ><g transform="scale(1.0 1.0)"><path d="M1.8 18.8 L5.6 3.6 M5.2 6.6 Q7.8 3 12.2 3 Q16.4 3 15.4 7.5 L12.6 18.8 M15 7.4 Q17.6 3 22.4 3 Q26.6 3 25.6 7.5 L22.8 18.8" fill="none" stroke="#548af7" stroke-width="3.6" stroke-linecap="round" stroke-linejoin="round" vector-effect="non-scaling-stroke"/></g></svg>
<div class="t" style="left:336px;top:2084.14px;font-size:27px;color:#5c9e5f;font-weight:normal;">pom.xml</div>
</div></div>
<div class="a" style="left:754px;top:246px;width:16px;height:1306px;background:#3e3f42;border-radius:8px"></div>
<div class="a" style="left:200px;top:2100px;width:272px;height:16px;background:#3e3f42;border-radius:8px"></div>
<div class="a" style="left:778px;top:238px;width:1777px;height:2px;background:#2f3034;"></div>
<svg class="ic" style="left:803px;top:188px" width="30" height="22" viewBox="0 0 30 22" ><g transform="scale(1.0 1.0)"><path d="M1.8 18.8 L5.6 3.6 M5.2 6.6 Q7.8 3 12.2 3 Q16.4 3 15.4 7.5 L12.6 18.8 M15 7.4 Q17.6 3 22.4 3 Q26.6 3 25.6 7.5 L22.8 18.8" fill="none" stroke="#4174d2" stroke-width="3.6" stroke-linecap="round" stroke-linejoin="round" vector-effect="non-scaling-stroke"/></g></svg>
<div class="t" style="left:845px;top:186.14px;font-size:27px;color:#55935a;font-weight:normal;">pom.xml (child1)</div>
<svg class="ic" style="left:1129px;top:182px" width="32" height="32" viewBox="0 0 32 32" ><circle cx="16" cy="16" r="13" fill="#1f2a44" stroke="#548af7" stroke-width="2"/><path d="M21.5 12.2 A6.6 6.6 0 1 0 21.5 19.8" fill="none" stroke="#548af7" stroke-width="2"/></svg>
<div class="t" style="left:1173px;top:186.14px;font-size:27px;color:#d6675c;font-weight:normal;">Main.java</div>
<svg class="ic" style="left:1310px;top:188px" width="20" height="20" viewBox="0 0 20 20" ><path d="M3 3 L17 17 M17 3 L3 17" stroke="#9a9da3" stroke-width="2"/></svg>
<div class="a" style="left:1106px;top:234px;width:246px;height:6px;background:#3574f0;border-radius:3px"></div>
<div class="a" style="left:2513px;top:184px;width:6px;height:6px;border-radius:50%;background:#ced0d6"></div>
<div class="a" style="left:2513px;top:195px;width:6px;height:6px;border-radius:50%;background:#ced0d6"></div>
<div class="a" style="left:2513px;top:206px;width:6px;height:6px;border-radius:50%;background:#ced0d6"></div>
<svg class="ic" style="left:2416px;top:252px" width="28" height="26" viewBox="0 0 28 26" ><path d="M14 2 L26 23 Q27 25 24.5 25 L3.5 25 Q1 25 2 23 Z" fill="#d6a04c"/><path d="M14 8 V16" stroke="#1e1f22" stroke-width="3"/><circle cx="14" cy="20.5" r="1.8" fill="#1e1f22"/></svg>
<div class="t" style="left:2448px;top:253.84px;font-size:25px;color:#b4b7bd;font-weight:normal;">1</div>
<svg class="ic" style="left:2478px;top:257px" width="20" height="14" viewBox="0 0 20 14" ><path d="M2 11 L10 3 L18 11" fill="none" stroke="#ced0d6" stroke-width="2"/></svg>
<svg class="ic" style="left:2520px;top:261px" width="20" height="14" viewBox="0 0 20 14" ><path d="M2 3 L10 11 L18 3" fill="none" stroke="#ced0d6" stroke-width="2"/></svg>
<div class="a" style="left:778px;top:1032px;width:1777px;height:44px;background:#242529;"></div>
<div class="a" style="left:928.0px;top:1032px;width:15px;height:44px;background:#43454a;"></div>
<div class="a" style="left:1208.8px;top:416px;width:15px;height:44px;background:#43454a;"></div>
<div class="a" style="left:923px;top:900px;width:1632px;height:44px;background:#3a2326;"></div>
<div class="a" style="left:923px;top:240px;width:1px;height:1882px;background:#313335;"></div>
<div class="a" style="left:987px;top:504px;width:1px;height:484px;background:#313335;"></div>
<div class="a" style="left:1049px;top:768px;width:1px;height:176px;background:#313335;"></div>
<div class="t mono" style="left:822.4px;top:250.0px;font-size:26px;color:#4b5059">1</div>
<div class="t mono" style="left:822.4px;top:294.0px;font-size:26px;color:#4b5059">2</div>
<div class="t mono" style="left:822.4px;top:338.0px;font-size:26px;color:#4b5059">3</div>
<div class="t mono" style="left:822.4px;top:382.0px;font-size:26px;color:#4b5059">4</div>
<div class="t mono" style="left:822.4px;top:426.0px;font-size:26px;color:#4b5059">5</div>
<div class="t mono" style="left:822.4px;top:470.0px;font-size:26px;color:#4b5059">6</div>
<div class="t mono" style="left:822.4px;top:514.0px;font-size:26px;color:#4b5059">7</div>
<div class="t mono" style="left:822.4px;top:558.0px;font-size:26px;color:#4b5059">8</div>
<div class="t mono" style="left:822.4px;top:602.0px;font-size:26px;color:#4b5059">9</div>
<div class="t mono" style="left:806.8px;top:646.0px;font-size:26px;color:#4b5059">10</div>
<div class="t mono" style="left:806.8px;top:690.0px;font-size:26px;color:#4b5059">11</div>
<div class="t mono" style="left:806.8px;top:734.0px;font-size:26px;color:#4b5059">12</div>
<div class="t mono" style="left:806.8px;top:778.0px;font-size:26px;color:#4b5059">13</div>
<div class="t mono" style="left:806.8px;top:822.0px;font-size:26px;color:#4b5059">14</div>
<div class="t mono" style="left:806.8px;top:866.0px;font-size:26px;color:#4b5059">15</div>
<div class="t mono" style="left:806.8px;top:954.0px;font-size:26px;color:#4b5059">17</div>
<div class="t mono" style="left:806.8px;top:998.0px;font-size:26px;color:#4b5059">18</div>
<div class="t mono" style="left:806.8px;top:1042.0px;font-size:26px;color:#a1a3ab">19</div>
<div class="a" style="left:810px;top:908px;width:28px;height:28px;border-radius:50%;background:#db5c5c"></div>
<svg class="ic" style="left:850px;top:424px" width="28" height="28" viewBox="0 0 28 28" ><path d="M3 2.5 L24 14 L3 25.5 Z" fill="#253627" stroke="#5fb865" stroke-width="2" stroke-linejoin="round"/></svg>
<svg class="ic" style="left:850px;top:468px" width="28" height="28" viewBox="0 0 28 28" ><path d="M3 2.5 L24 14 L3 25.5 Z" fill="#253627" stroke="#5fb865" stroke-width="2" stroke-linejoin="round"/></svg>
<div class="t mono" style="left:927.5px;top:250.0px;font-size:26px;line-height:30px"><span style="color:#cf8e6d;">package</span><span style="color:#bcbec4;"> org.example;</span></div>
<div class="t mono" style="left:927.5px;top:338.0px;font-size:26px;line-height:30px"><span style="color:#7a7e85;">// Press Shift twice to open the Search Everywhere dialog and type `show whitespaces`,</span></div>
<div class="t mono" style="left:927.5px;top:382.0px;font-size:26px;line-height:30px"><span style="color:#7a7e85;">// then press Enter. You can now see whitespace characters in your code.</span></div>
<div class="t mono" style="left:927.5px;top:426.0px;font-size:26px;line-height:30px"><span style="color:#cf8e6d;">public class</span><span style="color:#bcbec4;"> Main </span><span style="color:#bcbec4;">{</span></div>
<div class="t mono" style="left:927.5px;top:470.0px;font-size:26px;line-height:30px"><span style="color:#cf8e6d;">    public static void </span><span style="color:#56a8f5;">main</span><span style="color:#bcbec4;">(String[] args) {</span></div>
<div class="t mono" style="left:927.5px;top:514.0px;font-size:26px;line-height:30px"><span style="color:#7a7e85;">        // Press Opt+Enter with your caret at the highlighted text to see how</span></div>
<div class="t mono" style="left:927.5px;top:558.0px;font-size:26px;line-height:30px"><span style="color:#7a7e85;">        // IntelliJ IDEA suggests fixing it.</span></div>
<div class="t mono" style="left:927.5px;top:602.0px;font-size:26px;line-height:30px"><span style="color:#bcbec4;">        System.</span><span style="color:#c77dbb;font-style:italic;">out</span><span style="color:#bcbec4;">.</span><span style="color:#bcbec4;text-decoration:underline wavy #d6a04c;text-underline-offset:5px;text-decoration-thickness:1.5px;">printf</span><span style="color:#bcbec4;">(</span><span style="color:#6aab73;">&quot;Hello and welcome!&quot;</span><span style="color:#bcbec4;">);</span></div>
<div class="t mono" style="left:927.5px;top:690.0px;font-size:26px;line-height:30px"><span style="color:#7a7e85;">        // Press Ctrl+R or click the green arrow button in the gutter to run the code.</span></div>
<div class="t mono" style="left:927.5px;top:734.0px;font-size:26px;line-height:30px"><span style="color:#cf8e6d;">        for</span><span style="color:#bcbec4;"> (</span><span style="color:#cf8e6d;">int</span><span style="color:#bcbec4;"> </span><span style="color:#bcbec4;text-decoration:underline;text-underline-offset:5px;text-decoration-thickness:2px;">i</span><span style="color:#bcbec4;"> = </span><span style="color:#2aacb8;">1</span><span style="color:#bcbec4;">; </span><span style="color:#bcbec4;text-decoration:underline;text-underline-offset:5px;text-decoration-thickness:2px;">i</span><span style="color:#bcbec4;"> &lt;= </span><span style="color:#2aacb8;">5</span><span style="color:#bcbec4;">; </span><span style="color:#bcbec4;text-decoration:underline;text-underline-offset:5px;text-decoration-thickness:2px;">i</span><span style="color:#bcbec4;">++) {</span></div>
<div class="t mono" style="left:927.5px;top:822.0px;font-size:26px;line-height:30px"><span style="color:#7a7e85;">            // Press Ctrl+D to start debugging your code. We have set one breakpoint</span></div>
<div class="t mono" style="left:927.5px;top:866.0px;font-size:26px;line-height:30px"><span style="color:#7a7e85;">            // for you, but you can always add more by pressing Cmd+F8.</span></div>
<div class="t mono" style="left:927.5px;top:910.0px;font-size:26px;line-height:30px"><span style="color:#bcbec4;">            System.</span><span style="color:#c77dbb;font-style:italic;">out</span><span style="color:#bcbec4;">.println(</span><span style="color:#6aab73;">&quot;i = &quot;</span><span style="color:#bcbec4;"> + </span><span style="color:#bcbec4;text-decoration:underline;text-underline-offset:5px;text-decoration-thickness:2px;">i</span><span style="color:#bcbec4;">);</span></div>
<div class="t mono" style="left:927.5px;top:954.0px;font-size:26px;line-height:30px"><span style="color:#bcbec4;">        }</span></div>
<div class="t mono" style="left:927.5px;top:998.0px;font-size:26px;line-height:30px"><span style="color:#bcbec4;">    }</span></div>
<div class="t mono" style="left:927.5px;top:1042.0px;font-size:26px;line-height:30px"><span style="color:#bcbec4;">}</span></div>
<div class="a" style="left:2526px;top:644px;width:28px;height:4px;background:#c9a050;"></div>
<div class="a" style="left:2526px;top:951px;width:28px;height:4px;background:#8a5866;"></div>
<div class="t" style="left:2580px;top:186.14px;font-size:27px;color:#dfe1e5;font-weight:bold;">Maven</div>
<div class="a" style="left:2556px;top:238px;width:676px;height:2px;background:#1e1f22;"></div>
<svg class="ic" style="left:2578.0px;top:254.0px" width="36" height="36" viewBox="0 0 36 36" ><path d="M6 16 A12 12 0 0 1 28 11 M30 20 A12 12 0 0 1 8 25" fill="none" stroke="#ced0d6" stroke-width="2.4"/><path d="M29 5 V12 H22 M7 31 V24 H14" fill="none" stroke="#ced0d6" stroke-width="2.4"/></svg>
<svg class="ic" style="left:2631.0px;top:254.0px" width="36" height="36" viewBox="0 0 36 36" ><path d="M3 6 Q3 3 6 3 L12 3 L15 6 L25 6 Q28 6 28 9 L28 13 M14 28 L6 28 Q3 28 3 25 L3 6" fill="none" stroke="#ced0d6" stroke-width="2.4"/><path d="M18 22 A7 7 0 0 1 31 20 M32 27 A7 7 0 0 1 19 29" fill="none" stroke="#548af7" stroke-width="2.4"/></svg>
<svg class="ic" style="left:2684.0px;top:254.0px" width="36" height="36" viewBox="0 0 36 36" ><path d="M15 3 V22 M7 14 L15 22 L23 14 M3 22 V29 H28" fill="none" stroke="#ced0d6" stroke-width="2.4"/><path d="M34 26 L34 34 L26 34 Z" fill="#ced0d6"/></svg>
<div class="a" style="left:2732px;top:254px;width:2px;height:36px;background:#393b40;"></div>
<svg class="ic" style="left:2747.0px;top:254.0px" width="36" height="36" viewBox="0 0 36 36" ><path d="M18 4 V32 M4 18 H32" stroke="#ced0d6" stroke-width="2.4"/></svg>
<div class="a" style="left:2798px;top:254px;width:2px;height:36px;background:#393b40;"></div>
<svg class="ic" style="left:2815.0px;top:254.0px" width="36" height="36" viewBox="0 0 36 36" ><path d="M7 5 L30 18 L7 31 Z" fill="#5a5d63" stroke="#5a5d63" stroke-width="2" stroke-linejoin="round"/></svg>
<svg class="ic" style="left:2866.0px;top:254.0px" width="36" height="36" viewBox="0 0 36 36" ><rect x="3" y="5" width="28" height="24" rx="3" fill="none" stroke="#ced0d6" stroke-width="2.4"/><path d="M3 11 H31" stroke="#ced0d6" stroke-width="2.4"/><path d="M13 15 L21 20 L13 25 Z" fill="none" stroke="#ced0d6" stroke-width="2.2"/></svg>
<svg class="ic" style="left:2918.0px;top:254.0px" width="36" height="36" viewBox="0 0 36 36" ><path d="M9 28 Q2 28 2 21 Q2 15 8 14 Q10 6 18 6 Q25 6 27 13 Q34 14 34 21 Q34 28 27 28 Z" fill="none" stroke="#ced0d6" stroke-width="2.4"/><path d="M5 3 L32 32" stroke="#ced0d6" stroke-width="2.4"/></svg>
<svg class="ic" style="left:2969.0px;top:254.0px" width="36" height="36" viewBox="0 0 36 36" ><circle cx="18" cy="18" r="14" fill="none" stroke="#ced0d6" stroke-width="2.4"/><path d="M28 8 L8 28" stroke="#ced0d6" stroke-width="2.4"/></svg>
<svg class="ic" style="left:3021.0px;top:254.0px" width="36" height="36" viewBox="0 0 36 36" ><path d="M11 4 L18 11 L25 4 M11 32 L18 25 L25 32" fill="none" stroke="#ced0d6" stroke-width="2.4"/></svg>
<div class="a" style="left:3072px;top:254px;width:2px;height:36px;background:#393b40;"></div>
<svg class="ic" style="left:3086.0px;top:254.0px" width="36" height="36" viewBox="0 0 36 36" ><circle cx="19" cy="14" r="10" fill="none" stroke="#ced0d6" stroke-width="2.4"/><path d="M26 21 L33 29" stroke="#ced0d6" stroke-width="2.4"/><path d="M5 32 V22 M10 32 V18 M15 32 V24" stroke="#548af7" stroke-width="2.6"/></svg>
<svg class="ic" style="left:3139.0px;top:254.0px" width="36" height="36" viewBox="0 0 36 36" ><path d="M3 4 H33 M3 32 H33" stroke="#ced0d6" stroke-width="2.4"/><path d="M11 30 V10 M5 16 L11 10 L17 16 M25 30 V10 M19 16 L25 10 L31 16" fill="none" stroke="#548af7" stroke-width="2.4"/></svg>
<svg class="ic" style="left:3181.0px;top:254.0px" width="36" height="36" viewBox="0 0 36 36" ><path d="M13 10 L21 18 L13 26" fill="none" stroke="#ced0d6" stroke-width="2.2"/></svg>
<svg class="ic" style="left:2588.5px;top:328.0px" width="13" height="20" viewBox="0 0 13 20" ><path d="M2 2 L11 10.0 L2 18" fill="none" stroke="#a8abb1" stroke-width="2" stroke-linecap="round" stroke-linejoin="round"/></svg>
<svg class="ic" style="left:2623px;top:328px" width="30" height="22" viewBox="0 0 30 22" ><g transform="scale(1.0 1.0)"><path d="M1.8 18.8 L5.6 3.6 M5.2 6.6 Q7.8 3 12.2 3 Q16.4 3 15.4 7.5 L12.6 18.8 M15 7.4 Q17.6 3 22.4 3 Q26.6 3 25.6 7.5 L22.8 18.8" fill="none" stroke="#548af7" stroke-width="3.6" stroke-linecap="round" stroke-linejoin="round" vector-effect="non-scaling-stroke"/></g></svg>
<div class="t" style="left:2660px;top:326.14px;font-size:27px;color:#dfe1e5;font-weight:normal;">child1</div>
<svg class="ic" style="left:2585.0px;top:379.5px" width="20" height="13" viewBox="0 0 20 13" ><path d="M2 2 L10.0 11 L18 2" fill="none" stroke="#a8abb1" stroke-width="2" stroke-linecap="round" stroke-linejoin="round"/></svg>
<svg class="ic" style="left:2623px;top:376px" width="30" height="22" viewBox="0 0 30 22" ><g transform="scale(1.0 1.0)"><path d="M1.8 18.8 L5.6 3.6 M5.2 6.6 Q7.8 3 12.2 3 Q16.4 3 15.4 7.5 L12.6 18.8 M15 7.4 Q17.6 3 22.4 3 Q26.6 3 25.6 7.5 L22.8 18.8" fill="none" stroke="#548af7" stroke-width="3.6" stroke-linecap="round" stroke-linejoin="round" vector-effect="non-scaling-stroke"/></g></svg>
<div class="t" style="left:2660px;top:374.14px;font-size:27px;color:#dfe1e5;font-weight:normal;">helloMaven</div>
<div class="t" style="left:2810px;top:374.14px;font-size:27px;color:#72767d;font-weight:normal;">(root)</div>
<svg class="ic" style="left:2626.5px;top:424.0px" width="13" height="20" viewBox="0 0 13 20" ><path d="M2 2 L11 10.0 L2 18" fill="none" stroke="#a8abb1" stroke-width="2" stroke-linecap="round" stroke-linejoin="round"/></svg>
<svg class="ic" style="left:2661px;top:422px" width="32" height="30" viewBox="0 0 32 30" ><path d="M1 3.5 Q1 1 3.5 1 L11 1 L15 5 L24.5 5 Q27 5 27 7.5 L27 20.5 Q27 23 24.5 23 L3.5 23 Q1 23 1 20.5 Z" fill="#3b3d42" stroke="#ced0d6" stroke-width="2"/><circle cx="22" cy="22" r="10" fill="#27282a"/><path d="M29.90 22.00 L29.76 22.68 L29.32 23.29 L28.09 23.63 L26.86 23.77 L26.36 24.03 L26.07 24.35 L25.94 24.76 L25.96 25.32 L26.45 26.45 L26.78 27.69 L26.47 28.38 L25.95 28.84 L25.29 29.06 L24.54 28.98 L23.63 28.09 L22.90 27.09 L22.42 26.79 L22.00 26.70 L21.58 26.79 L21.10 27.09 L20.37 28.09 L19.46 28.98 L18.71 29.06 L18.05 28.84 L17.53 28.38 L17.22 27.69 L17.55 26.45 L18.04 25.32 L18.06 24.76 L17.93 24.35 L17.64 24.03 L17.14 23.77 L15.91 23.63 L14.68 23.29 L14.24 22.68 L14.10 22.00 L14.24 21.32 L14.68 20.71 L15.91 20.37 L17.14 20.23 L17.64 19.97 L17.93 19.65 L18.06 19.24 L18.04 18.68 L17.55 17.55 L17.22 16.31 L17.53 15.62 L18.05 15.16 L18.71 14.94 L19.46 15.02 L20.37 15.91 L21.10 16.91 L21.58 17.21 L22.00 17.30 L22.42 17.21 L22.90 16.91 L23.63 15.91 L24.54 15.02 L25.29 14.94 L25.95 15.16 L26.47 15.62 L26.78 16.31 L26.45 17.55 L25.96 18.68 L25.94 19.24 L26.07 19.65 L26.36 19.97 L26.86 20.23 L28.09 20.37 L29.32 20.71 L29.76 21.32 Z" fill="#1e2a45" stroke="#548af7" stroke-width="2" stroke-linejoin="round"/><circle cx="22" cy="22" r="1.8" fill="#548af7"/></svg>
<div class="t" style="left:2698px;top:422.14px;font-size:27px;color:#dfe1e5;font-weight:normal;letter-spacing:0.35px;">Lifecycle</div>
<svg class="ic" style="left:2626.5px;top:472.0px" width="13" height="20" viewBox="0 0 13 20" ><path d="M2 2 L11 10.0 L2 18" fill="none" stroke="#a8abb1" stroke-width="2" stroke-linecap="round" stroke-linejoin="round"/></svg>
<svg class="ic" style="left:2661px;top:470px" width="32" height="30" viewBox="0 0 32 30" ><path d="M1 3.5 Q1 1 3.5 1 L11 1 L15 5 L24.5 5 Q27 5 27 7.5 L27 20.5 Q27 23 24.5 23 L3.5 23 Q1 23 1 20.5 Z" fill="#3b3d42" stroke="#ced0d6" stroke-width="2"/><circle cx="22" cy="22" r="10" fill="#27282a"/><path d="M29.90 22.00 L29.76 22.68 L29.32 23.29 L28.09 23.63 L26.86 23.77 L26.36 24.03 L26.07 24.35 L25.94 24.76 L25.96 25.32 L26.45 26.45 L26.78 27.69 L26.47 28.38 L25.95 28.84 L25.29 29.06 L24.54 28.98 L23.63 28.09 L22.90 27.09 L22.42 26.79 L22.00 26.70 L21.58 26.79 L21.10 27.09 L20.37 28.09 L19.46 28.98 L18.71 29.06 L18.05 28.84 L17.53 28.38 L17.22 27.69 L17.55 26.45 L18.04 25.32 L18.06 24.76 L17.93 24.35 L17.64 24.03 L17.14 23.77 L15.91 23.63 L14.68 23.29 L14.24 22.68 L14.10 22.00 L14.24 21.32 L14.68 20.71 L15.91 20.37 L17.14 20.23 L17.64 19.97 L17.93 19.65 L18.06 19.24 L18.04 18.68 L17.55 17.55 L17.22 16.31 L17.53 15.62 L18.05 15.16 L18.71 14.94 L19.46 15.02 L20.37 15.91 L21.10 16.91 L21.58 17.21 L22.00 17.30 L22.42 17.21 L22.90 16.91 L23.63 15.91 L24.54 15.02 L25.29 14.94 L25.95 15.16 L26.47 15.62 L26.78 16.31 L26.45 17.55 L25.96 18.68 L25.94 19.24 L26.07 19.65 L26.36 19.97 L26.86 20.23 L28.09 20.37 L29.32 20.71 L29.76 21.32 Z" fill="#1e2a45" stroke="#548af7" stroke-width="2" stroke-linejoin="round"/><circle cx="22" cy="22" r="1.8" fill="#548af7"/></svg>
<div class="t" style="left:2698px;top:470.14px;font-size:27px;color:#dfe1e5;font-weight:normal;">Plugins</div>
<svg class="ic" style="left:2626.5px;top:520.0px" width="13" height="20" viewBox="0 0 13 20" ><path d="M2 2 L11 10.0 L2 18" fill="none" stroke="#a8abb1" stroke-width="2" stroke-linecap="round" stroke-linejoin="round"/></svg>
<svg class="ic" style="left:2661px;top:518px" width="32" height="30" viewBox="0 0 32 30" ><path d="M1 3.5 Q1 1 3.5 1 L11 1 L15 5 L24.5 5 Q27 5 27 7.5 L27 20.5 Q27 23 24.5 23 L3.5 23 Q1 23 1 20.5 Z" fill="#3b3d42" stroke="#ced0d6" stroke-width="2"/><rect x="13" y="10" width="19" height="20" rx="3" fill="#27282a"/><path d="M15.5 28 V20.5 Q15.5 19 17 19 L19.5 19 V14.5 Q19.5 13 21 13 L23.5 13 Q25 13 25 14.5 V19 L27 19 Q28.5 19 28.5 20.5 V28 Z" fill="#1e2a45" stroke="#548af7" stroke-width="2" stroke-linejoin="round"/><path d="M19.5 19 V28 M25 19 V28" stroke="#548af7" stroke-width="2"/></svg>
<div class="t" style="left:2698px;top:518.14px;font-size:27px;color:#dfe1e5;font-weight:normal;">Dependencies</div>
<svg class="ic" style="left:3254.0px;top:177.0px" width="40" height="40" viewBox="0 0 40 40" ><path d="M8 30 Q10 26 10 18 Q10 7 20 7 Q30 7 30 18 Q30 26 32 30 Z" fill="none" stroke="#ced0d6" stroke-width="2.4" stroke-linejoin="round"/><path d="M16 34 Q20 37 24 34" fill="none" stroke="#ced0d6" stroke-width="2.4"/></svg>
<div class="a" style="left:3278px;top:176px;width:18px;height:18px;border-radius:50%;background:#e55765;border:2px solid #27282a"></div>
<svg class="ic" style="left:3254.0px;top:257.0px" width="40" height="40" viewBox="0 0 40 40" ><ellipse cx="20" cy="8" rx="15" ry="5.5" fill="none" stroke="#ced0d6" stroke-width="2.4"/><path d="M5 8 V32 Q5 37.5 20 37.5 Q35 37.5 35 32 V8 M5 16 Q5 21.5 20 21.5 Q35 21.5 35 16 M5 24 Q5 29.5 20 29.5 Q35 29.5 35 24" fill="none" stroke="#ced0d6" stroke-width="2.4"/></svg>
<svg class="ic" style="left:3254.0px;top:337.0px" width="40" height="40" viewBox="0 0 40 40" ><defs><linearGradient id="cg" x1="0" y1="0" x2="0" y2="1"><stop offset="0" stop-color="#1e9bff"/><stop offset="1" stop-color="#1565f0"/></linearGradient></defs><path d="M20 3 Q37 3 37 19 Q37 35 20 35 Q15 35 12 33 L4 37 L6 29 Q3 25 3 19 Q3 3 20 3 Z" fill="url(#cg)"/><circle cx="15" cy="19" r="2.2" fill="#1b2b44"/><circle cx="25" cy="19" r="2.2" fill="#1b2b44"/></svg>
<svg class="ic" style="left:3255.0px;top:419.0px" width="38" height="38" viewBox="0 0 38 38" ><g transform="translate(19.0 19.0) scale(1.0)"><circle r="18.5" fill="#fff"/><g transform="rotate(0)"><path d="M-3.5 4 L-3.5 -9 A7.5 7.5 0 0 1 11.5 -9 L11.5 -2" fill="#fff" stroke="#000" stroke-width="1.6" stroke-linejoin="round"/></g><g transform="rotate(60)"><path d="M-3.5 4 L-3.5 -9 A7.5 7.5 0 0 1 11.5 -9 L11.5 -2" fill="#fff" stroke="#000" stroke-width="1.6" stroke-linejoin="round"/></g><g transform="rotate(120)"><path d="M-3.5 4 L-3.5 -9 A7.5 7.5 0 0 1 11.5 -9 L11.5 -2" fill="#fff" stroke="#000" stroke-width="1.6" stroke-linejoin="round"/></g><g transform="rotate(180)"><path d="M-3.5 4 L-3.5 -9 A7.5 7.5 0 0 1 11.5 -9 L11.5 -2" fill="#fff" stroke="#000" stroke-width="1.6" stroke-linejoin="round"/></g><g transform="rotate(240)"><path d="M-3.5 4 L-3.5 -9 A7.5 7.5 0 0 1 11.5 -9 L11.5 -2" fill="#fff" stroke="#000" stroke-width="1.6" stroke-linejoin="round"/></g><g transform="rotate(300)"><path d="M-3.5 4 L-3.5 -9 A7.5 7.5 0 0 1 11.5 -9 L11.5 -2" fill="#fff" stroke="#000" stroke-width="1.6" stroke-linejoin="round"/></g><path d="M0 -7 L6.06 -3.5 L6.06 3.5 L0 7 L-6.06 3.5 L-6.06 -3.5 Z" fill="#fff" stroke="#000" stroke-width="1.6"/></g></svg>
<svg class="ic" style="left:3254.0px;top:497.0px" width="40" height="40" viewBox="0 0 40 40" ><g transform="scale(1.0)"><path d="M2 27 Q2 20 9 18 L31 18 Q38 20 38 27 Q38 36 20 38 Q2 36 2 27 Z" fill="#ced0d6"/><path d="M9 22 L31 22 Q33 22 33 24 L33 29.5 Q33 33.5 20 34.2 Q7 33.5 7 29.5 L7 24 Q7 22 9 22 Z" fill="#27282a"/><rect x="13" y="24" width="3.6" height="6.5" rx="1.8" fill="#ced0d6"/><rect x="23.4" y="24" width="3.6" height="6.5" rx="1.8" fill="#ced0d6"/><rect x="5.5" y="4.5" width="15" height="13" rx="6" fill="#27282a" stroke="#ced0d6" stroke-width="3"/><rect x="19.5" y="4.5" width="15" height="13" rx="6" fill="#27282a" stroke="#ced0d6" stroke-width="3"/></g></svg>
<svg class="ic" style="left:3254.0px;top:577.0px" width="40" height="40" viewBox="0 0 40 40" ><g transform="scale(1.0)"><path d="M2 27 Q2 20 9 18 L31 18 Q38 20 38 27 Q38 36 20 38 Q2 36 2 27 Z" fill="#ced0d6"/><path d="M9 22 L31 22 Q33 22 33 24 L33 29.5 Q33 33.5 20 34.2 Q7 33.5 7 29.5 L7 24 Q7 22 9 22 Z" fill="#27282a"/><rect x="13" y="24" width="3.6" height="6.5" rx="1.8" fill="#ced0d6"/><rect x="5.5" y="4.5" width="15" height="13" rx="6" fill="#27282a" stroke="#ced0d6" stroke-width="3"/><rect x="19.5" y="4.5" width="15" height="13" rx="6" fill="#27282a" stroke="#ced0d6" stroke-width="3"/><path d="M20 22 Q20 19 23 19 L38 19 Q41 19 41 22 L41 31 Q41 34 38 34 L36 34 L36.5 40 L31 34 L23 34 Q20 34 20 31 Z" fill="#ced0d6" stroke="#27282a" stroke-width="2.4"/></g></svg>
<div class="a" style="left:3244px;top:648px;width:60px;height:60px;background:#43454a;border-radius:10px"></div>
<svg class="ic" style="left:3254px;top:665px" width="38" height="28" viewBox="0 0 38 28" ><g transform="scale(1.2666666666666666 1.3)"><path d="M1.8 18.8 L5.6 3.6 M5.2 6.6 Q7.8 3 12.2 3 Q16.4 3 15.4 7.5 L12.6 18.8 M15 7.4 Q17.6 3 22.4 3 Q26.6 3 25.6 7.5 L22.8 18.8" fill="none" stroke="#ced0d6" stroke-width="3.6" stroke-linecap="round" stroke-linejoin="round" vector-effect="non-scaling-stroke"/></g></svg>
<svg class="ic" style="left:139px;top:2143px" width="18" height="18" viewBox="0 0 18 18" ><rect x="1.5" y="1.5" width="14" height="14" rx="3.5" fill="#1e2a45" stroke="#548af7" stroke-width="2"/></svg>
<div class="t" style="left:165px;top:2139.14px;font-size:27px;color:#9fa2a8;font-weight:normal;">helloMaven</div>
<svg class="ic" style="left:322.5px;top:2141.0px" width="13" height="20" viewBox="0 0 13 20" ><path d="M2 2 L11 10.0 L2 18" fill="none" stroke="#9a9da3" stroke-width="2" stroke-linecap="round" stroke-linejoin="round"/></svg>
<svg class="ic" style="left:353px;top:2143px" width="18" height="18" viewBox="0 0 18 18" ><rect x="1.5" y="1.5" width="14" height="14" rx="3.5" fill="#1e2a45" stroke="#548af7" stroke-width="2"/></svg>
<div class="t" style="left:379px;top:2139.14px;font-size:27px;color:#9fa2a8;font-weight:normal;">child1</div>
<svg class="ic" style="left:466.5px;top:2141.0px" width="13" height="20" viewBox="0 0 13 20" ><path d="M2 2 L11 10.0 L2 18" fill="none" stroke="#9a9da3" stroke-width="2" stroke-linecap="round" stroke-linejoin="round"/></svg>
<div class="t" style="left:499px;top:2139.14px;font-size:27px;color:#9fa2a8;font-weight:normal;">src</div>
<svg class="ic" style="left:552.5px;top:2141.0px" width="13" height="20" viewBox="0 0 13 20" ><path d="M2 2 L11 10.0 L2 18" fill="none" stroke="#9a9da3" stroke-width="2" stroke-linecap="round" stroke-linejoin="round"/></svg>
<div class="t" style="left:584px;top:2139.14px;font-size:27px;color:#9fa2a8;font-weight:normal;">main</div>
<svg class="ic" style="left:660.5px;top:2141.0px" width="13" height="20" viewBox="0 0 13 20" ><path d="M2 2 L11 10.0 L2 18" fill="none" stroke="#9a9da3" stroke-width="2" stroke-linecap="round" stroke-linejoin="round"/></svg>
<div class="t" style="left:692px;top:2139.14px;font-size:27px;color:#9fa2a8;font-weight:normal;">java</div>
<svg class="ic" style="left:758.5px;top:2141.0px" width="13" height="20" viewBox="0 0 13 20" ><path d="M2 2 L11 10.0 L2 18" fill="none" stroke="#9a9da3" stroke-width="2" stroke-linecap="round" stroke-linejoin="round"/></svg>
<div class="t" style="left:790px;top:2139.14px;font-size:27px;color:#9fa2a8;font-weight:normal;">org</div>
<svg class="ic" style="left:849.5px;top:2141.0px" width="13" height="20" viewBox="0 0 13 20" ><path d="M2 2 L11 10.0 L2 18" fill="none" stroke="#9a9da3" stroke-width="2" stroke-linecap="round" stroke-linejoin="round"/></svg>
<div class="t" style="left:880px;top:2139.14px;font-size:27px;color:#9fa2a8;font-weight:normal;">example</div>
<svg class="ic" style="left:1000.5px;top:2141.0px" width="13" height="20" viewBox="0 0 13 20" ><path d="M2 2 L11 10.0 L2 18" fill="none" stroke="#9a9da3" stroke-width="2" stroke-linecap="round" stroke-linejoin="round"/></svg>
<svg class="ic" style="left:1032px;top:2135px" width="32" height="32" viewBox="0 0 32 32" ><circle cx="16" cy="16" r="13" fill="#1f2a44" stroke="#548af7" stroke-width="2"/><path d="M21.5 12.2 A6.6 6.6 0 1 0 21.5 19.8" fill="none" stroke="#548af7" stroke-width="2"/></svg>
<div class="t" style="left:1072px;top:2139.14px;font-size:27px;color:#9fa2a8;font-weight:normal;">Main</div>
<svg class="ic" style="left:2598.0px;top:2139.0px" width="26" height="26" viewBox="0 0 26 26" ><g transform="translate(13.0 13.0) scale(0.6842105263157895)"><circle r="18.5" fill="#fff"/><g transform="rotate(0)"><path d="M-3.5 4 L-3.5 -9 A7.5 7.5 0 0 1 11.5 -9 L11.5 -2" fill="#fff" stroke="#000" stroke-width="1.6" stroke-linejoin="round"/></g><g transform="rotate(60)"><path d="M-3.5 4 L-3.5 -9 A7.5 7.5 0 0 1 11.5 -9 L11.5 -2" fill="#fff" stroke="#000" stroke-width="1.6" stroke-linejoin="round"/></g><g transform="rotate(120)"><path d="M-3.5 4 L-3.5 -9 A7.5 7.5 0 0 1 11.5 -9 L11.5 -2" fill="#fff" stroke="#000" stroke-width="1.6" stroke-linejoin="round"/></g><g transform="rotate(180)"><path d="M-3.5 4 L-3.5 -9 A7.5 7.5 0 0 1 11.5 -9 L11.5 -2" fill="#fff" stroke="#000" stroke-width="1.6" stroke-linejoin="round"/></g><g transform="rotate(240)"><path d="M-3.5 4 L-3.5 -9 A7.5 7.5 0 0 1 11.5 -9 L11.5 -2" fill="#fff" stroke="#000" stroke-width="1.6" stroke-linejoin="round"/></g><g transform="rotate(300)"><path d="M-3.5 4 L-3.5 -9 A7.5 7.5 0 0 1 11.5 -9 L11.5 -2" fill="#fff" stroke="#000" stroke-width="1.6" stroke-linejoin="round"/></g><path d="M0 -7 L6.06 -3.5 L6.06 3.5 L0 7 L-6.06 3.5 L-6.06 -3.5 Z" fill="#fff" stroke="#000" stroke-width="1.6"/></g></svg>
<svg class="ic" style="left:2656px;top:2136px" width="30" height="32" viewBox="0 0 30 32" ><defs><linearGradient id="vg" x1="0" y1="0" x2="1" y2="1"><stop offset="0" stop-color="#3ddc5a"/><stop offset="1" stop-color="#1a7fe0"/></linearGradient></defs><path d="M2 3 H10 L13 22 L22 3 H29 L14 30 H7 Z" fill="url(#vg)"/></svg>
<div class="t" style="left:2720px;top:2139.14px;font-size:27px;color:#9fa2a8;font-weight:normal;letter-spacing:-1.8px;">19:1</div>
<div class="t" style="left:2801px;top:2139.14px;font-size:27px;color:#9fa2a8;font-weight:normal;">LF</div>
<div class="t" style="left:2863px;top:2139.14px;font-size:27px;color:#9fa2a8;font-weight:normal;">UTF-8</div>
<svg class="ic" style="left:2975.0px;top:2137.0px" width="30" height="30" viewBox="0 0 30 30" ><g transform="scale(0.75)"><path d="M2 27 Q2 20 9 18 L31 18 Q38 20 38 27 Q38 36 20 38 Q2 36 2 27 Z" fill="#ced0d6"/><path d="M9 22 L31 22 Q33 22 33 24 L33 29.5 Q33 33.5 20 34.2 Q7 33.5 7 29.5 L7 24 Q7 22 9 22 Z" fill="#27282a"/><rect x="13" y="24" width="3.6" height="6.5" rx="1.8" fill="#ced0d6"/><rect x="23.4" y="24" width="3.6" height="6.5" rx="1.8" fill="#ced0d6"/><rect x="5.5" y="4.5" width="15" height="13" rx="6" fill="#27282a" stroke="#ced0d6" stroke-width="3"/><rect x="19.5" y="4.5" width="15" height="13" rx="6" fill="#27282a" stroke="#ced0d6" stroke-width="3"/></g></svg>
<div class="t" style="left:3039px;top:2139.14px;font-size:27px;color:#9fa2a8;font-weight:normal;">4 spaces</div>
<svg class="ic" style="left:3186px;top:2138px" width="30" height="28" viewBox="0 0 30 28" ><rect x="2" y="11" width="19" height="14" rx="3" fill="none" stroke="#ced0d6" stroke-width="2"/><path d="M15 11 V7 Q15 2 20 2 Q25 2 25 7 V10" fill="none" stroke="#ced0d6" stroke-width="2"/><path d="M11 15 V20" stroke="#ced0d6" stroke-width="2"/></svg>
<div class="a" style="left:3248px;top:2138px;width:28px;height:28px;border-radius:50%;background:#db5c5c"></div>
<svg class="ic" style="left:3248px;top:2138px" width="28" height="28" viewBox="0 0 28 28" ><path d="M14 6 V16" stroke="#fff" stroke-width="3.2" stroke-linecap="round"/><circle cx="14" cy="21.5" r="2" fill="#fff"/></svg>
<div class="a" style="left:2472px;top:1959px;width:740px;height:143px;border-radius:12px;background:#313236;border:2px solid #3c3e42;box-shadow:0 4px 16px rgba(0,0,0,.35)"></div>
<svg class="ic" style="left:2501px;top:1990px" width="28" height="28" viewBox="0 0 28 28" ><circle cx="14" cy="14" r="14" fill="#3574f0"/><path d="M14 12 V21" stroke="#fff" stroke-width="3"/><circle cx="14" cy="7.5" r="1.9" fill="#fff"/></svg>
<div class="t" style="left:2545px;top:1992.14px;font-size:27px;color:#dfe1e5;font-weight:normal;letter-spacing:0.3px;">Externally added files can be added to Git</div>
<div class="t" style="left:2545px;top:2037.14px;font-size:27px;color:#548af7;font-weight:normal;">View Files</div>
<div class="t" style="left:2701px;top:2037.14px;font-size:27px;color:#548af7;font-weight:normal;letter-spacing:0.3px;">Always Add</div>
<div class="t" style="left:2877px;top:2037.14px;font-size:27px;color:#548af7;font-weight:normal;letter-spacing:0.3px;">Don&#x27;t Ask Again</div>
</div></div>
<div id="winborder"></div>
</body></html>
